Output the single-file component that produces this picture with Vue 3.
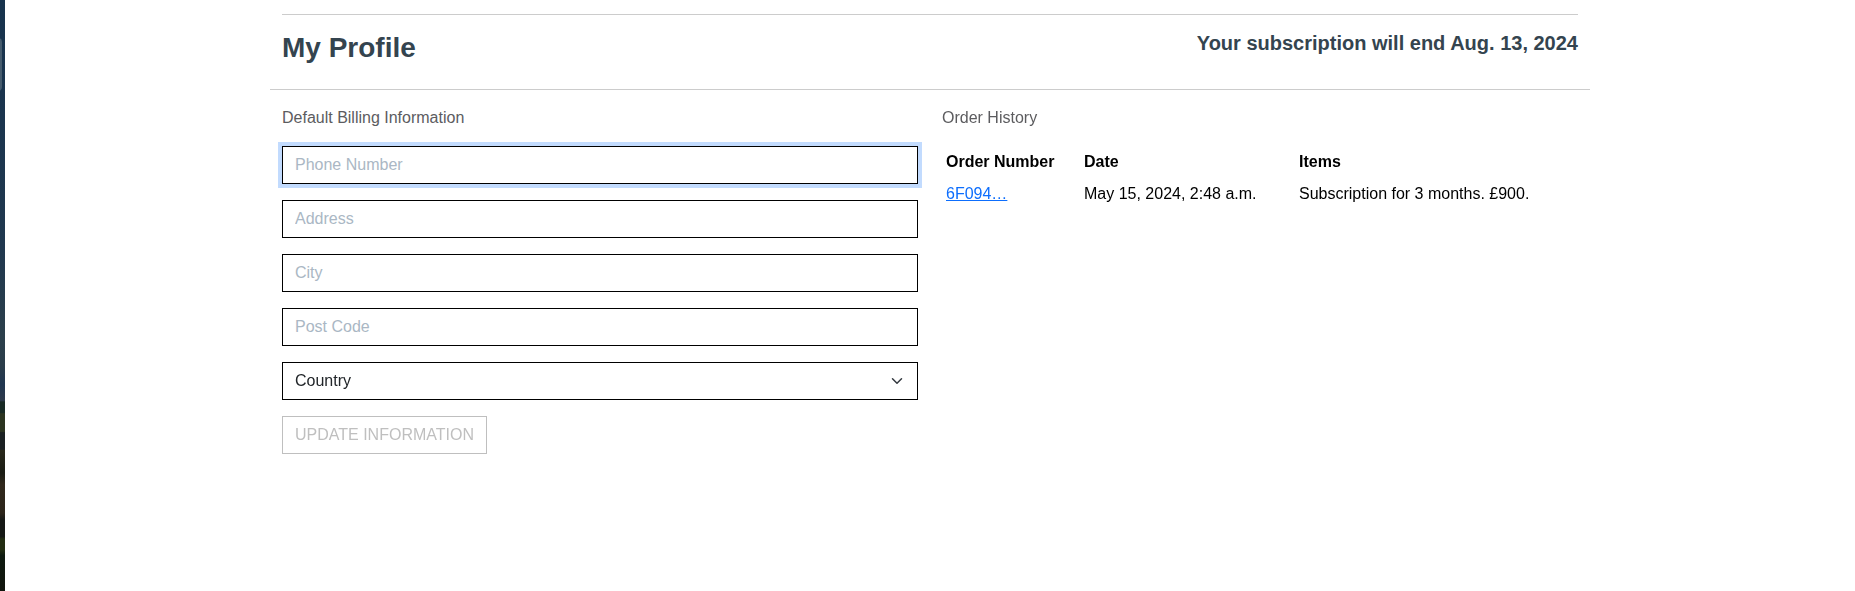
<script setup>
import { onMounted, ref } from 'vue'

const fields = [
  { id: 'phone', label: 'Phone Number', type: 'tel' },
  { id: 'address', label: 'Address', type: 'text' },
  { id: 'city', label: 'City', type: 'text' },
  { id: 'postcode', label: 'Post Code', type: 'text' },
]
const orders = [
  { number: '6F094…', date: 'May 15, 2024, 2:48 a.m.', items: 'Subscription for 3 months. £900.' },
]
const form = ref(null)
onMounted(() => form.value.querySelector('input').focus())
</script>

<template>
  <div class="page">
    <div class="backdrop" aria-hidden="true"><span class="panel"></span></div>
    <main class="overlay">
      <div class="container">
        <header class="heading">
          <h1>My Profile</h1>
          <h2>Your subscription will end Aug. 13, 2024</h2>
        </header>
        <div class="columns">
          <section>
            <p class="caption">Default Billing Information</p>
            <form ref="form" @submit.prevent>
              <template v-for="f in fields" :key="f.id">
                <input :id="f.id" class="control" :type="f.type" :placeholder="f.label" :aria-label="f.label" />
              </template>
              <div class="select-wrap">
                <select id="country" class="control" aria-label="Country">
                  <option>Country</option>
                </select>
                <svg class="chevron" viewBox="0 0 16 16" aria-hidden="true">
                  <path d="m2 5 6 6 6-6" fill="none" stroke="#343a40" stroke-width="2" stroke-linecap="round" stroke-linejoin="round" />
                </svg>
              </div>
              <button type="submit" class="update">UPDATE INFORMATION</button>
            </form>
          </section>
          <section>
            <p class="caption">Order History</p>
            <table>
              <thead>
                <tr>
                  <th class="col-number">Order Number</th>
                  <th class="col-date">Date</th>
                  <th>Items</th>
                </tr>
              </thead>
              <tbody>
                <tr v-for="o in orders" :key="o.number">
                  <td><a href="#">{{ o.number }}</a></td>
                  <td>{{ o.date }}</td>
                  <td>{{ o.items }}</td>
                </tr>
              </tbody>
            </table>
          </section>
        </div>
      </div>
    </main>
  </div>
</template>

<style>
body {
  margin: 0;
  background: #fff;
}
</style>

<style scoped>
* {
  box-sizing: border-box;
}
.page {
  display: flex;
  min-height: 100vh;
  font: 16px/24px "Liberation Sans", Arial, sans-serif;
  color: #000;
}
.backdrop {
  position: relative;
  flex: 0 0 5px;
  background: linear-gradient(
    #17334d 0%, #1b354e 20%, #20384f 42%, #2b3f4b 57%, #2a3c4a 62%, #203650 65%, #2d394a 67.8%,
    #182a25 68%, #182a25 69.8%, #2b3420 70%, #2b3420 73%,
    #1a2022 73.2%, #1a2022 76%, #29281b 76.2%, #1a1c14 80%, #30281c 82%, #2c251a 86.8%,
    #151815 88%, #151815 90.8%, #222d12 91.2%, #222d12 93%, #0e1a10 94%, #11150d 100%
  );
  overflow: hidden;
}
.panel {
  position: absolute;
  top: 38px;
  right: 3px;
  width: 8px;
  height: 53px;
  border-radius: 4px;
  background: #455b6d;
}
.overlay {
  flex: 1;
  min-width: 0;
  background: #fff;
}
.container {
  max-width: 1320px;
  margin: 0 auto;
  padding-top: 14px;
}
.heading {
  display: flex;
  justify-content: space-between;
  align-items: flex-start;
  margin: 0 12px;
  padding: 16px 0 24px;
  border-top: 1px solid #ccc;
}
h1,
h2 {
  margin: 0;
  color: #34444f;
}
h1 {
  font-size: 28px;
  line-height: 34px;
}
h2 {
  font-size: 20px;
  line-height: 24px;
}
.columns {
  display: grid;
  grid-template-columns: 1fr 1fr;
  padding-top: 16px;
  border-top: 1px solid #ccc;
}
.columns section {
  padding: 0 12px;
}
.caption {
  margin: 0 0 16px;
  color: #5c5c5f;
}
form {
  display: flex;
  flex-direction: column;
  gap: 16px;
}
.control {
  display: block;
  width: 100%;
  height: 38px;
  padding: 6px 12px;
  font: inherit;
  color: #212529;
  background: #fff;
  border: 1px solid #000;
  border-radius: 0;
  outline: 0;
  appearance: none;
}
.control::placeholder {
  color: #aab7c4;
  opacity: 1;
}
.control:focus {
  box-shadow: 0 0 0 4px #c2dbfe;
  caret-color: transparent;
}
.select-wrap {
  position: relative;
}
.chevron {
  position: absolute;
  top: 13px;
  right: 15px;
  width: 12px;
  height: 12px;
  pointer-events: none;
}
.update {
  align-self: flex-start;
  height: 38px;
  padding: 0 12px;
  font: inherit;
  color: #bfbfbf;
  background: #fff;
  border: 1px solid #bfbfbf;
}
table {
  width: 100%;
  border-collapse: collapse;
  text-align: left;
}
th,
td {
  padding: 4px;
}
.col-number {
  width: 138px;
}
.col-date {
  width: 215px;
}
a {
  color: #0d6efd;
}
</style>
